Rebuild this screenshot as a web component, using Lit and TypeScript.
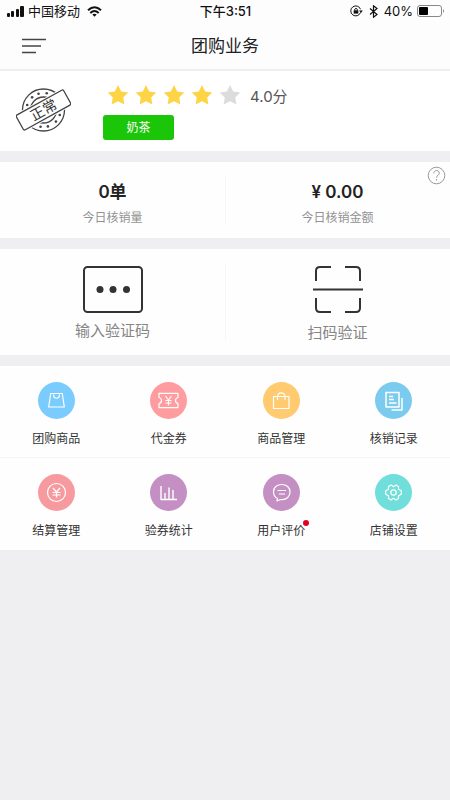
import { LitElement, html, svg, css } from "lit";
import { customElement, property } from "lit/decorators.js";
import { classMap } from "lit/directives/class-map.js";

const icons: Record<string, unknown> = {
  bag: svg`<path d="M12.700 11.500H24.300L26.300 25H10.700Z"/><path d="M15.500 12.500C15.500 17.500 21.500 17.500 21.500 12.500"/>`,
  coupon: svg`<path d="M9 11.300H28V15.500Q25.500 16 25.500 18.500T28 21.500V25.700H9V21.500Q11.500 21 11.500 18.500T9 15.500Z"/><path d="M15.500 14L18.500 18L21.500 14M18.500 18V23.500M15.500 18.500H21.500M15.500 21H21.500"/>`,
  tote: svg`<path d="M10.500 14.500H26V26.500H10.500ZM14.500 18V15C14.500 9.500 22 9.500 22 15V18"/>`,
  records: svg`<path d="M11 10.500H24V25H11ZM27 16V28H16.500" stroke-width="1.500"/><path d="M14 14.500H18M14 17.500H19M14 21H21.500" stroke-width="1.500"/>`,
  yuan: svg`<circle cx="18.500" cy="18.500" r="9"/><path d="M15 14L18.500 18L22 14M18.500 18V23.500M14.500 18.500H22.500M14.500 21H22.500"/>`,
  chart: svg`<path d="M11 12V25.500H27M15 25V19M19 25V13.500M23 25V16" stroke-width="1.400"/>`,
  comment: svg`<path d="M14.500 24.500L14 27L17.500 25.500C23.500 26.300 27 22.500 27 18C27 13.500 23.500 10.500 18.700 10.500S10.500 13.500 10.500 18C10.500 21 12 23.300 14.500 24.500Z"/><path d="M14.500 16.500H23M16 20H22"/>`,
  gear: svg`<path d="M16 11L18.500 12.700L21 11L23.500 12.500V15.300L26.300 16.700V20.300L23.500 21.700V24.500L21 26L18.500 24.300L16 26L13.500 24.500V21.700L10.700 20.300V16.700L13.500 15.300V12.500Z"/><circle cx="18.500" cy="18.500" r="2.700"/>`,
};

@customElement("status-bar")
class StatusBar extends LitElement {
  static styles = css`
    :host {
      display: grid;
      grid-template-columns: 1fr auto 1fr;
      align-items: center;
      height: 22px;
      padding: 0 5px 0 6px;
      font-size: 13px;
      line-height: 20px;
      color: #111;
    }
    .side { display: flex; align-items: center; gap: 4px; }
    .wifi { margin-left: 3px; }
    .end { justify-content: flex-end; }
    .time { font-weight: 500; }
    svg { display: block; flex: none; }
  `;
  render() {
    return html`
      <div class="side">
        <svg width="18" height="12" viewBox="0 0 18 12" fill="#111">
          <rect x="1" y="8" width="3" height="4" rx="1" /><rect x="5" y="6" width="3" height="6" rx="1" />
          <rect x="10" y="4" width="3" height="8" rx="1" /><rect x="14" y="1" width="4" height="11" rx="1" />
        </svg>
        <span>中国移动</span>
        <svg class="wifi" width="15" height="11" viewBox="0 0 15 11" fill="none" stroke="#111" stroke-width="2">
          <path d="M1 4.300Q7.500 -1.800 14 4.300M3.300 7Q7.500 3 11.700 7" />
          <path d="M5.300 8.500Q7.500 6.800 9.700 8.500L7.500 10.800Z" fill="#111" stroke="none" />
        </svg>
      </div>
      <span class="time">下午3:51</span>
      <div class="side end">
        <svg width="13" height="12" viewBox="0 0 13 12" fill="none" stroke="#111">
          <path d="M10.500 7.500A5 5 0 1 1 10.500 4.300" /><path d="M9 5.500H12.800L11 8Z" fill="#111" stroke="none" />
          <rect x="3.700" y="5.300" width="4.600" height="3.300" fill="#111" stroke="none" /><path d="M4.700 5.500V4.300Q6 2.300 7.300 4.300V5.500" />
        </svg>
        <svg width="13" height="13" viewBox="0 0 13 13" fill="none" stroke="#111" stroke-width="1.200">
          <path d="M3 3.500L10 9.500L6.500 12.200V.8L10 3.500L3 9.500" />
        </svg>
        <span>40%</span>
        <svg width="28" height="12" viewBox="0 0 28 12">
          <rect x=".5" y=".5" width="24" height="11" rx="2.500" fill="none" stroke="#888" />
          <rect x="2" y="2" width="9" height="8" rx="1" fill="#000" /><path d="M26 4Q28 6 26 8Z" fill="#888" />
        </svg>
      </div>
    `;
  }
}

@customElement("shop-summary")
class ShopSummary extends LitElement {
  @property({ type: Number }) score = 4;
  static styles = css`
    :host { display: flex; padding: 12px 16px 11px; gap: 32px; background: #fff; }
    .stamp { display: block; margin-top: 2px; font-size: 14px; }
    .info { display: flex; flex-direction: column; align-items: flex-start; gap: 8px; }
    .rating { display: flex; align-items: center; height: 24px; padding-left: 1px; color: #555; font-size: 15px; }
    .star { width: 28px; height: 22px; fill: #dcdbde; }
    .lit { fill: #fed447; }
    .value { margin-left: 6px; }
    .tag {
      width: 71px;
      border-radius: 3px;
      background: #1bc507;
      color: #fff;
      font-size: 12px;
      line-height: 25px;
      text-align: center;
    }
  `;
  render() {
    const dots = [-163, -132, -107, -79, 17, 43, 75, 100];
    return html`
      <svg class="stamp" width="55" height="50" viewBox="0 0 55 50" fill="none" stroke="#444" stroke-width="1.300">
        <circle cx="27.500" cy="25" r="21" /><circle cx="27.500" cy="25" r="13" />
        ${dots.map((a) => {
          const r = (a * Math.PI) / 180;
          return svg`<circle cx=${27.5 + 17 * Math.cos(r)} cy=${25 + 17 * Math.sin(r)} r="1.300" fill="#444" stroke="none"/>`;
        })}
        <g transform="rotate(-29 27.500 25)">
          <rect x="-1" y="15" width="57" height="20" fill="#fff" stroke="none" />
          <rect x="0.500" y="16.500" width="54" height="17" rx="1.500" fill="#fff" />
          <text x="27.500" y="30" text-anchor="middle" fill="#333" stroke="none">正常</text>
        </g>
      </svg>
      <div class="info">
        <div class="rating">
          ${[1, 2, 3, 4, 5].map(
            (n) => html`<svg class=${classMap({ star: true, lit: n <= this.score })} viewBox="0 0 28 22">
              <path d="M14 1L17.200 7.500L24.300 8.500L19.200 13.500L20.400 20.600L14 17.300L7.600 20.600L8.800 13.500L3.700 8.500L10.800 7.500Z" />
            </svg>`,
          )}
          <span class="value">${this.score.toFixed(1)}分</span>
        </div>
        <span class="tag">奶茶</span>
      </div>
    `;
  }
}

@customElement("menu-entry")
class MenuEntry extends LitElement {
  @property() label = "";
  @property() icon = "";
  @property() tone = "";
  @property({ type: Boolean }) unread = false;
  static styles = css`
    :host { display: block; }
    button {
      display: flex;
      flex-direction: column;
      align-items: center;
      gap: 10px;
      width: 100%;
      padding: 16px 0 9px;
      border: 0;
      background: none;
      color: #333;
      font: inherit;
      font-size: 12px;
      line-height: 20px;
    }
    .disc { display: block; width: 37px; height: 37px; border-radius: 50%; }
    .blue { background: #7accff; }
    .pink { background: #ff9ca0; }
    .orange { background: #ffca70; }
    .sky { background: #7bcbef; }
    .rose { background: #f79a9f; }
    .purple { background: #c48fc2; }
    .teal { background: #70dfdb; }
    .label { position: relative; }
    .dot {
      position: absolute;
      top: -1px;
      right: -4px;
      width: 6px;
      height: 6px;
      border-radius: 50%;
      background: #e60020;
    }
  `;
  render() {
    return html`<button type="button">
      <svg class="disc ${this.tone}" viewBox="0 0 37 37" fill="none" stroke="#fff" stroke-width="1.200" stroke-linejoin="round">
        ${icons[this.icon]}
      </svg>
      <span class="label">${this.label}${this.unread ? html`<i class="dot"></i>` : ""}</span>
    </button>`;
  }
}

const entries = [
  { label: "团购商品", icon: "bag", tone: "blue" },
  { label: "代金券", icon: "coupon", tone: "pink" },
  { label: "商品管理", icon: "tote", tone: "orange" },
  { label: "核销记录", icon: "records", tone: "sky" },
  { label: "结算管理", icon: "yuan", tone: "rose" },
  { label: "验券统计", icon: "chart", tone: "purple" },
  { label: "用户评价", icon: "comment", tone: "purple", unread: true },
  { label: "店铺设置", icon: "gear", tone: "teal" },
];

@customElement("app-root")
class AppRoot extends LitElement {
  static styles = css`
    :host {
      display: block;
      min-height: 100vh;
      background: #efeef1;
      font-family: "Inter", "Noto Sans CJK SC", sans-serif;
    }
    header { background: #fefdfe; border-bottom: 2px solid #eeeeef; }
    nav { display: grid; grid-template-columns: 1fr auto 1fr; align-items: center; height: 47px; padding: 0 22px; }
    h1 { margin: 0; font-size: 17px; font-weight: 400; line-height: 24px; color: #222; }
    button { border: 0; padding: 0; background: none; font: inherit; }
    .menu { justify-self: start; }
    svg { display: block; }
    main { display: flex; flex-direction: column; gap: 11px; }
    .pair { position: relative; display: grid; grid-template-columns: 1fr 1fr; background: #fefefe; text-align: center; }
    .divided::before {
      content: "";
      position: absolute;
      left: 50%;
      top: 14px;
      bottom: 14px;
      width: 1px;
      background: #f6f5f8;
    }
    .stat { display: flex; flex-direction: column; gap: 4px; padding: 18px 0 10px; }
    .amount { font-size: 17px; font-weight: 600; line-height: 24px; color: #222; }
    .caption { font-size: 12px; line-height: 20px; color: #929292; }
    .help { position: absolute; top: 4px; right: 4px; }
    .action {
      display: flex;
      flex-direction: column;
      align-items: center;
      gap: 6px;
      padding: 17px 0 10px;
      color: #858585;
      font-size: 15px;
      line-height: 24px;
    }
    .grid { display: grid; grid-template-columns: repeat(4, 1fr); background: #fefefe; }
    .grid menu-entry:nth-child(n + 5) { box-shadow: 0 -1px #f5f4f7; }
  `;
  render() {
    return html`
      <header>
        <status-bar></status-bar>
        <nav>
          <button class="menu" type="button" aria-label="菜单">
            <svg width="24" height="16" viewBox="0 0 24 16" stroke="#444" stroke-width="1.500">
              <path d="M0 1.500H24M0 8H19M0 14.500H14" />
            </svg>
          </button>
          <h1>团购业务</h1>
        </nav>
      </header>
      <main>
        <shop-summary></shop-summary>
        <section class="pair divided">
          <div class="stat"><span class="amount">0单</span><span class="caption">今日核销量</span></div>
          <div class="stat"><span class="amount">¥ 0.00</span><span class="caption">今日核销金额</span></div>
          <button class="help" type="button" aria-label="帮助">
            <svg width="19" height="19" viewBox="0 0 19 19" fill="none" stroke="#999">
              <circle cx="9.500" cy="9.500" r="8.300" />
              <path d="M6.800 7.300C6.800 3.600 12.300 3.600 12.300 7.200C12.300 9.300 9.500 9.300 9.500 11.700M9.500 13V14.500" />
            </svg>
          </button>
        </section>
        <section class="pair divided">
          <button class="action" type="button">
            <svg width="60" height="47" viewBox="0 0 60 47">
              <rect x="1" y="1" width="58" height="45" rx="3.500" fill="none" stroke="#333" stroke-width="2" />
              <circle cx="17" cy="23.500" r="3.500" fill="#333" /><circle cx="30" cy="23.500" r="3.500" fill="#333" />
              <circle cx="43.500" cy="23.500" r="3.500" fill="#333" />
            </svg>
            <span>输入验证码</span>
          </button>
          <button class="action" type="button">
            <svg width="50" height="49" viewBox="0 0 50 49" fill="none" stroke="#333" stroke-width="2">
              <path d="M3 15V5Q3 1 7 1H18M32 1H43Q47 1 47 5V15M0 23.500H50M3 32V42Q3 46 7 46H18M32 46H43Q47 46 47 42V32" />
            </svg>
            <span>扫码验证</span>
          </button>
        </section>
        <section class="grid">
          ${entries.map(
            (e) => html`<menu-entry .label=${e.label} .icon=${e.icon} .tone=${e.tone} .unread=${!!e.unread}></menu-entry>`,
          )}
        </section>
      </main>
    `;
  }
}
